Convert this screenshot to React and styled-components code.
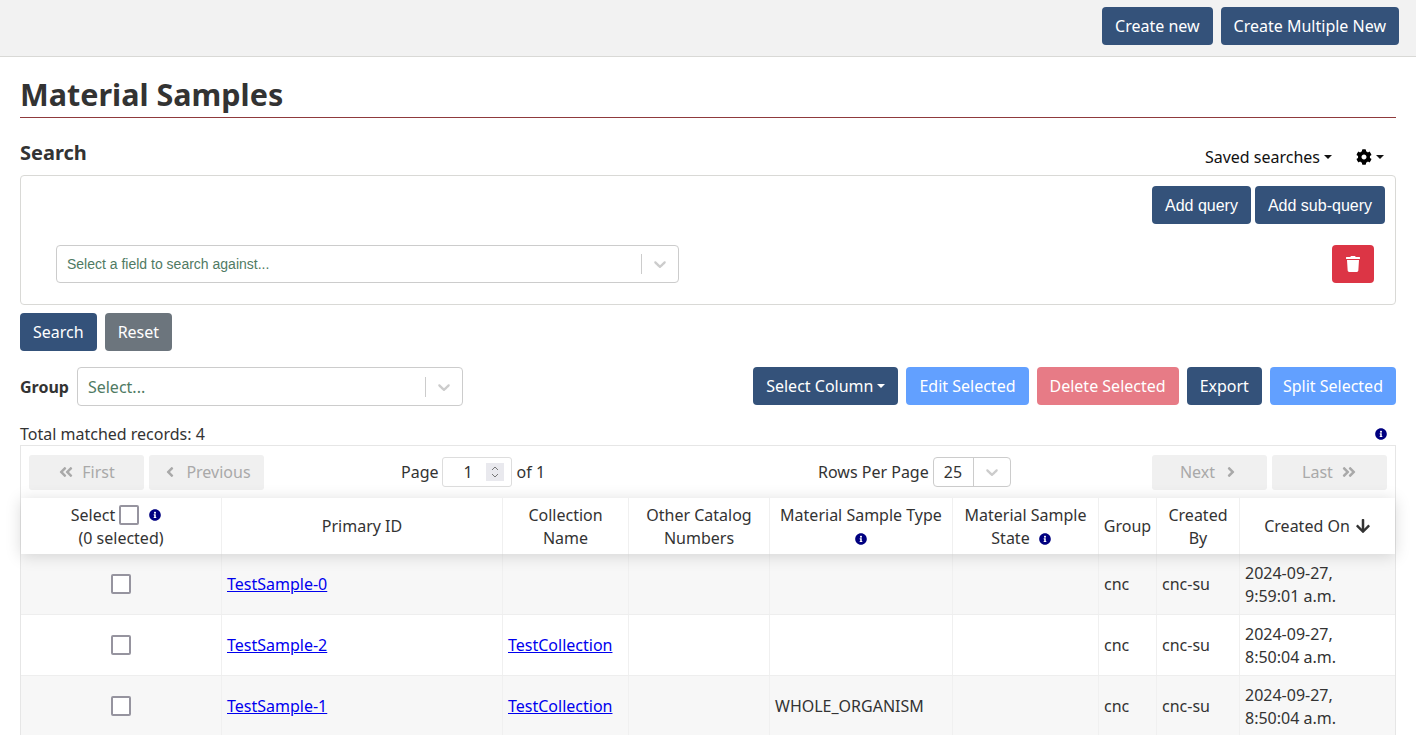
import React from 'react'
import styled, { createGlobalStyle } from 'styled-components'
import {
  FaAngleDoubleLeft,
  FaAngleDoubleRight,
  FaAngleLeft,
  FaAngleRight,
  FaArrowDown,
  FaCog,
  FaInfoCircle,
  FaTrash,
} from 'react-icons/fa'

const GlobalStyle = createGlobalStyle`
  html, body {
    margin: 0;
    padding: 0;
    height: 735px;
    overflow: hidden;
    background: #fff;
    color: #333;
    font-family: "Noto Sans", sans-serif;
    font-size: 16px;
    line-height: 24px;
  }
  * { box-sizing: border-box; }
`

const COLUMNS = '201px 281px 126px 141px 183px 146px 58px 83px 1fr'

const TopBar = styled.header`
  display: flex;
  justify-content: flex-end;
  gap: 8px;
  height: 57px;
  padding: 7px 17px 0 0;
  background: #f2f2f2;
  border-bottom: 1px solid #d9d9d6;
`

const Button = styled.button`
  display: inline-flex;
  align-items: center;
  justify-content: center;
  height: 38px;
  padding: ${p => (p.$arial ? '2px 13px 0' : '0 13px')};
  border: 0;
  border-radius: 4px;
  color: #fff;
  font-family: ${p => (p.$arial ? '"Liberation Sans", sans-serif' : '"Noto Sans", sans-serif')};
  font-size: 16px;
  white-space: nowrap;
  background: ${p => ({
    primary: '#34527a',
    light: '#62a0ff',
    danger: '#e77b86',
    grey: '#6c757d',
    red: '#dc3545',
  }[p.$tone || 'primary'])};
`

const Caret = styled.span`
  display: inline-block;
  margin-left: 4px;
  border-top: 4.8px solid currentColor;
  border-left: 4.8px solid transparent;
  border-right: 4.8px solid transparent;
`

const Page = styled.main`
  padding: 15px 20px 0;
`

const Title = styled.h1`
  margin: 0;
  height: 46px;
  font-size: 30.5px;
  line-height: 45px;
  font-weight: 700;
  color: #333;
  border-bottom: 1px solid #8f3a3c;
`

const SearchHead = styled.div`
  display: flex;
  justify-content: space-between;
  height: 57px;
  padding-top: 21px;
`

const SearchTitle = styled.h2`
  margin: 0;
  font-size: 20px;
  line-height: 27px;
  font-weight: 700;
`

const HeadMenus = styled.div`
  display: flex;
  align-items: center;
  gap: 24px;
  height: 34px;
  padding: 0 12px 0 0;
  margin-top: 1px;
  color: #111;
`

const Menu = styled.span`
  display: inline-flex;
  align-items: center;
  svg { font-size: 16px; color: #000; }
`

const QueryPanel = styled.section`
  height: 130px;
  padding: 10px 10px 0 35px;
  border: 1px solid #d9d9d6;
  border-radius: 4px;
`

const QueryActions = styled.div`
  display: flex;
  justify-content: flex-end;
  gap: 4px;
`

const QueryRow = styled.div`
  display: flex;
  justify-content: space-between;
  align-items: center;
  margin-top: 21px;
  padding-right: 11px;
`

const SelectBox = styled.div`
  display: flex;
  align-items: center;
  width: ${p => p.$width}px;
  height: ${p => p.$height || 38}px;
  padding-left: 10px;
  background: #fff;
  border: 1px solid #ccc;
  border-radius: 4px;
`

const Placeholder = styled.span`
  flex: 1;
  color: #4f7a63;
  font-family: ${p => (p.$arial ? '"Liberation Sans", sans-serif' : '"Noto Sans", sans-serif')};
  font-size: ${p => (p.$arial ? '14px' : '16px')};
`

const Divider = styled.span`
  width: 1px;
  height: ${p => (p.$full ? '100%' : '20px')};
  background: #ccc;
`

const Chevron = styled.svg`
  width: 20px;
  height: 20px;
  margin: 0 8px;
  fill: #ccc;
`

const SelectChevron = () => (
  <Chevron viewBox="0 0 20 20">
    <path d="M4.516 7.548c0.436-0.446 1.043-0.481 1.576 0l3.908 3.747 3.908-3.747c0.533-0.481 1.141-0.446 1.576 0 0.436 0.445 0.408 1.197 0 1.615-0.406 0.418-4.695 4.502-4.695 4.502-0.217 0.223-0.502 0.335-0.789 0.335s-0.572-0.112-0.789-0.335c0 0-4.287-4.084-4.695-4.502s-0.436-1.17 0-1.615z" />
  </Chevron>
)

const SearchActions = styled.div`
  display: flex;
  gap: 8px;
  margin-top: 8px;
`

const GroupRow = styled.div`
  display: flex;
  justify-content: space-between;
  margin-top: 16px;
`

const GroupField = styled.div`
  display: flex;
  align-items: center;
  gap: 8px;
`

const GroupLabel = styled.label`
  font-weight: 700;
`

const BulkActions = styled.div`
  display: flex;
  gap: 8px;
`

const TotalRow = styled.div`
  display: flex;
  justify-content: space-between;
  align-items: center;
  height: 23px;
  margin-top: 16px;
  padding-right: 9px;
`

const Info = styled(FaInfoCircle)`
  font-size: 12px;
  color: #000080;
  vertical-align: -1px;
  margin-left: ${p => p.$gap || 0}px;
`

const TableBox = styled.div`
  border: 1px solid #e6e6e6;
  border-bottom: 0;
`

const Pagination = styled.div`
  display: flex;
  align-items: center;
  height: 52px;
  padding: 0 8px;
`

const PagerGroup = styled.div`
  display: flex;
  gap: 5px;
  margin-left: ${p => (p.$end ? 'auto' : '0')};
`

const PagerButton = styled.span`
  display: inline-flex;
  align-items: center;
  justify-content: center;
  gap: 8px;
  width: 115px;
  height: 35px;
  background: #f0f0f0;
  border-radius: 3px;
  color: #a9a9a9;
  svg { font-size: 16px; }
`

const PagerInfo = styled.div`
  display: flex;
  align-items: center;
  gap: 3px;
  margin-left: ${p => p.$left}px;
  white-space: nowrap;
`

const PageInput = styled.span`
  display: flex;
  align-items: center;
  justify-content: space-between;
  width: 70px;
  height: 30px;
  margin-right: 2px;
  padding: 0 7px 0 21px;
  border: 1px solid #ddd;
  border-radius: 3px;
`

const Spinner = styled.svg`
  width: 18px;
  height: 18px;
  background: #e9e9ee;
  stroke: #777;
  fill: none;
`

const RowsSelect = styled.span`
  display: flex;
  align-items: center;
  width: 78px;
  height: 30px;
  margin-left: 1px;
  border: 1px solid #ccc;
  border-radius: 4px;
  padding-left: 10px;
  span:first-child { flex: 1; }
`

const Row = styled.div`
  display: grid;
  grid-template-columns: ${COLUMNS};
  height: 61px;
  background: ${p => (p.$odd ? '#f7f7f7' : '#fff')};
  border-bottom: 1px solid #eee;
`

const HeadRow = styled(Row)`
  position: relative;
  height: 56px;
  background: #fff;
  border-bottom: 0;
  box-shadow: 0 2px 15px rgba(0, 0, 0, 0.15);
`

const HeadCell = styled.div`
  display: flex;
  flex-direction: column;
  align-items: center;
  justify-content: center;
  padding: 1px 5px 0;
  text-align: center;
  line-height: 23px;
  border-right: 1px solid #f0f0f0;
  &:last-child { border-right: 0; }
`

const Cell = styled.div`
  display: flex;
  align-items: center;
  justify-content: ${p => (p.$center ? 'center' : 'flex-start')};
  padding: 0 5px;
  line-height: 23px;
  border-right: 1px solid #f0f0f0;
  &:last-child { border-right: 0; }
`

const DateText = styled.span`
  padding-top: 1px;
`

const Link = styled.a`
  color: #0000ee;
  text-decoration: underline;
`

const Check = styled.span`
  display: inline-block;
  flex: none;
  width: 20px;
  height: 20px;
  background: #fff;
  border: 2px solid #96949f;
  border-radius: 2px;
  margin: ${p => (p.$head ? '0 0 0 4px' : '0')};
`

const SelectLine = styled.span`
  display: flex;
  align-items: center;
  padding-right: 10px;
`

const StateLine = styled.span`
  padding-right: 9px;
`

const SortIcon = styled(FaArrowDown)`
  font-size: 16px;
  margin-left: 5px;
  vertical-align: -2px;
`

const rows = [
  { id: 'TestSample-0', collection: '', type: '', created: '9:59:01 a.m.' },
  { id: 'TestSample-2', collection: 'TestCollection', type: '', created: '8:50:04 a.m.' },
  { id: 'TestSample-1', collection: 'TestCollection', type: 'WHOLE_ORGANISM', created: '8:50:04 a.m.' },
]

export default function App() {
  return (
    <>
      <GlobalStyle />
      <TopBar>
        <Button>Create new</Button>
        <Button>Create Multiple New</Button>
      </TopBar>
      <Page>
        <Title>Material Samples</Title>
        <SearchHead>
          <SearchTitle>Search</SearchTitle>
          <HeadMenus>
            <Menu>Saved searches<Caret /></Menu>
            <Menu><FaCog /><Caret /></Menu>
          </HeadMenus>
        </SearchHead>
        <QueryPanel>
          <QueryActions>
            <Button $arial>Add query</Button>
            <Button $arial>Add sub-query</Button>
          </QueryActions>
          <QueryRow>
            <SelectBox $width={623}>
              <Placeholder $arial>Select a field to search against...</Placeholder>
              <Divider />
              <SelectChevron />
            </SelectBox>
            <Button $tone="red"><FaTrash size={16} /></Button>
          </QueryRow>
        </QueryPanel>
        <SearchActions>
          <Button>Search</Button>
          <Button $tone="grey">Reset</Button>
        </SearchActions>
        <GroupRow>
          <GroupField>
            <GroupLabel>Group</GroupLabel>
            <SelectBox $width={386} $height={39}>
              <Placeholder>Select...</Placeholder>
              <Divider />
              <SelectChevron />
            </SelectBox>
          </GroupField>
          <BulkActions>
            <Button>Select Column<Caret /></Button>
            <Button $tone="light">Edit Selected</Button>
            <Button $tone="danger">Delete Selected</Button>
            <Button>Export</Button>
            <Button $tone="light">Split Selected</Button>
          </BulkActions>
        </GroupRow>
        <TotalRow>
          <span>Total matched records: 4</span>
          <Info />
        </TotalRow>
        <TableBox>
          <Pagination>
            <PagerGroup>
              <PagerButton><FaAngleDoubleLeft />First</PagerButton>
              <PagerButton><FaAngleLeft />Previous</PagerButton>
            </PagerGroup>
            <PagerInfo $left={137}>
              Page
              <PageInput>
                1
                <Spinner viewBox="0 0 18 18">
                  <path d="M6 7l3-3 3 3M6 11l3 3 3-3" />
                </Spinner>
              </PageInput>
              of 1
            </PagerInfo>
            <PagerInfo $left={273}>
              Rows Per Page
              <RowsSelect>
                <span>25</span>
                <Divider $full />
                <SelectChevron />
              </RowsSelect>
            </PagerInfo>
            <PagerGroup $end>
              <PagerButton>Next<FaAngleRight /></PagerButton>
              <PagerButton>Last<FaAngleDoubleRight /></PagerButton>
            </PagerGroup>
          </Pagination>
          <HeadRow>
            <HeadCell>
              <SelectLine>Select<Check $head /><Info $gap={10} /></SelectLine>
              <span>(0 selected)</span>
            </HeadCell>
            <HeadCell>Primary ID</HeadCell>
            <HeadCell>Collection Name</HeadCell>
            <HeadCell>Other Catalog Numbers</HeadCell>
            <HeadCell>
              <span>Material Sample Type</span>
              <span><Info /></span>
            </HeadCell>
            <HeadCell>
              <span>Material Sample</span>
              <StateLine>State<Info $gap={9} /></StateLine>
            </HeadCell>
            <HeadCell>Group</HeadCell>
            <HeadCell>Created By</HeadCell>
            <HeadCell>
              <span>Created On<SortIcon /></span>
            </HeadCell>
          </HeadRow>
          {rows.map((row, i) => (
            <Row key={row.id} $odd={i % 2 === 0}>
              <Cell $center><Check /></Cell>
              <Cell><Link href="#">{row.id}</Link></Cell>
              <Cell>{row.collection && <Link href="#">{row.collection}</Link>}</Cell>
              <Cell />
              <Cell>{row.type}</Cell>
              <Cell />
              <Cell>cnc</Cell>
              <Cell>cnc-su</Cell>
              <Cell><DateText>2024-09-27,<br />{row.created}</DateText></Cell>
            </Row>
          ))}
        </TableBox>
      </Page>
    </>
  )
}
